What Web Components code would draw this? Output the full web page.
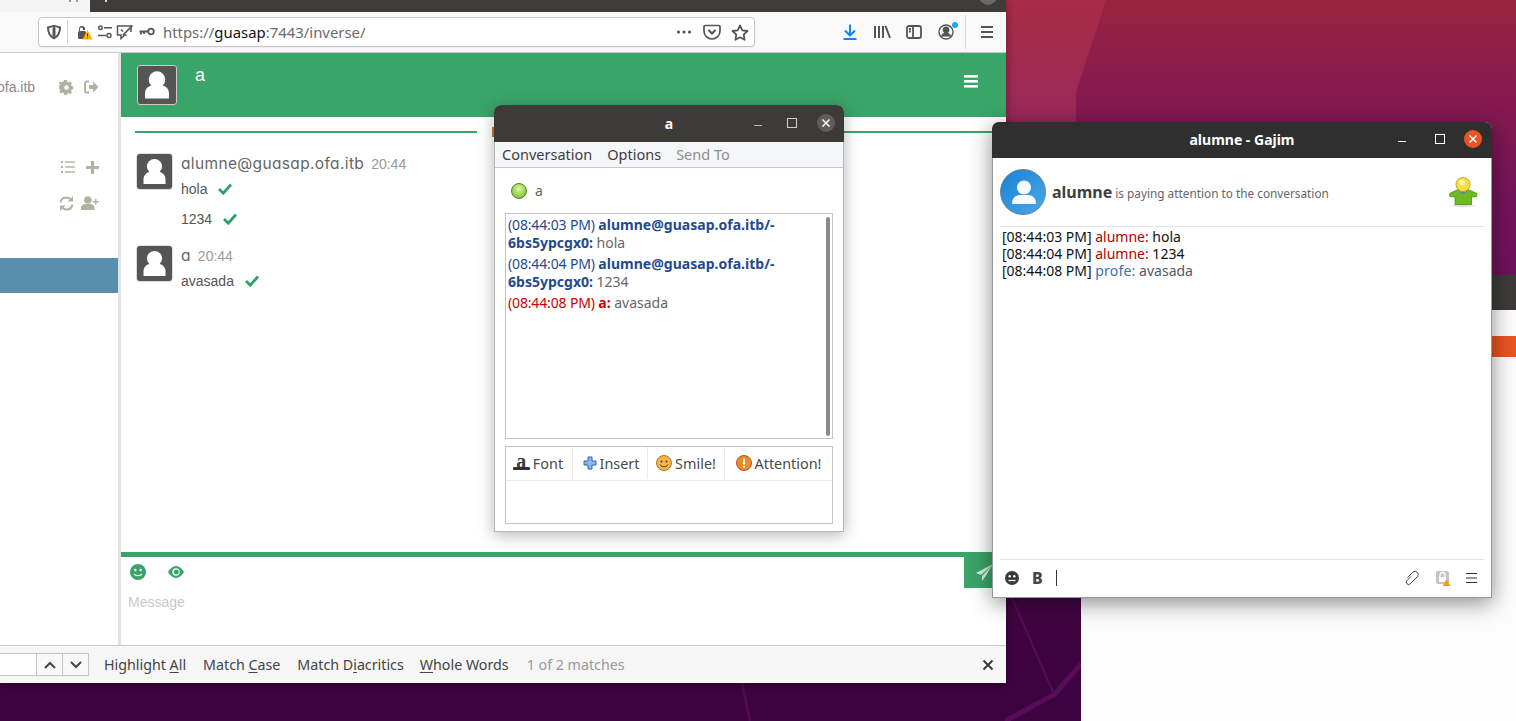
<!DOCTYPE html>
<html>
<head>
<meta charset="utf-8">
<title>guasap</title>
<style>
  html, body { margin: 0; height: 100%; overflow: hidden; }
</style>
</head>
<body>
<desktop-screen>
  <back-window></back-window>
  <browser-window>
    <nav-bar></nav-bar>
    <chat-page>
      <chat-sidebar slot="side"></chat-sidebar>
      <chat-msg name="alumne@guasap.ofa.itb" time="20:44">
        <chat-line>hola</chat-line>
        <chat-line>1234</chat-line>
      </chat-msg>
      <chat-msg name="a" time="20:44">
        <chat-line>avasada</chat-line>
      </chat-msg>
    </chat-page>
    <find-bar></find-bar>
  </browser-window>
  <pidgin-window></pidgin-window>
  <gajim-window></gajim-window>
</desktop-screen>

<script>
const AVATAR = `<svg viewBox="0 0 35 35" width="100%" height="100%" style="display:block"><circle cx="17.5" cy="12.5" r="7.6" fill="#fff"/><path d="M6.5 30v-4.5c0-5 3.5-7.5 7-7.5h8c3.500 0 7 2.500 7 7.500V30z" fill="#fff"/></svg>`;

function define(name, html) {
  customElements.define(name, class extends HTMLElement {
    constructor() {
      super();
      this.attachShadow({ mode: 'open' }).innerHTML = html;
    }
  });
}

define('desktop-screen', `
  <style>
    :host { display: block; position: relative; width: 1516px; height: 721px; overflow: hidden;
      background: linear-gradient(180deg, #98243f 0, #85194f 100px, #74145a 200px, #6b1157 300px, #560a4f 480px, #3f0440 640px, #3c0340 721px); }
    svg { position: absolute; left: 0; top: 0; }
  </style>
  <svg width="1516" height="721" viewBox="0 0 1516 721" fill="none">
    <defs><linearGradient id="wedge" x1="0" y1="0" x2="0" y2="1"><stop offset="0" stop-color="#a92c46"/><stop offset="1" stop-color="#9a285a"/></linearGradient></defs>
    <path d="M1006 0h100l-30 92v30h-70z" fill="url(#wedge)"/>
    <path d="M1012 598l41 94" stroke="#560c58" stroke-width="2"/>
    <path d="M1005 721l50-27 26-30" stroke="#560c58" stroke-width="5"/>
    <path d="M742 683l8 38" stroke="#4f0a52" stroke-width="3"/>
  </svg>
  <slot></slot>
`);

define('back-window', `
  <style>
    :host { position: absolute; left: 1081px; top: 275px; width: 435px; height: 446px; display: flex; flex-direction: column; background: #fcfcfc; }
    .bar { height: 35px; background: #3c3b37; }
    .orange { height: 21px; margin-top: 26px; background: #e95420; }
  </style>
  <div class="bar"></div>
  <div class="orange"></div>
`);

define('browser-window', `
  <style>
    :host { position: absolute; left: 0; top: 0; width: 1006px; height: 683px; display: flex; flex-direction: column; background: #fff; box-shadow: 0 2px 10px rgba(0,0,0,.35); }
  </style>
  <slot></slot>
`);

define('nav-bar', `
  <style>
    :host { display: block; flex: none; font-family: "Noto Sans", sans-serif; }
    .tabs { height: 12px; display: flex; background: #3d3c39; overflow: hidden; }
    .tabs .left { width: 90px; background: #f5f5f5; display: flex; padding-left: 69px; box-sizing: border-box; gap: 5px; }
    .tabs .left i { width: 2px; height: 2px; background: #999; }
    .tabs .mark { width: 2px; height: 2px; background: #ddd; margin-left: 15px; }
    .tabs .grow { flex: 1; }
    .tabs .x { width: 18px; height: 18px; margin: -13px 9px 0 0; border-radius: 50%; background: #6a6966; }
    .bar { height: 41px; box-sizing: border-box; display: flex; align-items: center; background: #f9f9fa; border-bottom: 1px solid #c8c8c8; padding-left: 38px; }
    .url { width: 717px; height: 30px; box-sizing: border-box; border: 1px solid #c6c6c6; border-radius: 4px; background: #fff; display: flex; align-items: center; padding-left: 7px; color: #555; box-shadow: 0 1px 1px rgba(0,0,0,.04); }
    .url svg, .tools svg { display: block; flex: none; }
    .sep { width: 1px; height: 24px; background: #d4d4d4; margin: 0 6px 0 5px; flex: none; }
    .addr { flex: 1; margin-left: 8px; font-size: 14.9px; color: #6b6b6b; white-space: nowrap; }
    .addr b { font-weight: 400; color: #111; }
    .tools { display: flex; align-items: center; margin-left: 87px; }
    .tools .dot { position: relative; }
    .tools .dot::after { content: ""; position: absolute; right: -4px; top: -2px; width: 6px; height: 6px; border-radius: 50%; background: #13a9f2; }
    .tools .vsep { width: 1px; height: 34px; background: #d8d8d8; margin: 0 13px 0 11px; }
  </style>
  <div class="tabs"><div class="left"><i></i><i></i></div><div class="mark"></div><div class="grow"></div><div class="x"></div></div>
  <div class="bar">
    <div class="url">
      <svg width="16" height="16" viewBox="0 0 16 16" fill="none" stroke="#555" stroke-width="2"><path d="M2 3.500c2-.8 4-1.200 6-1.500 2 .3 4 .7 6 1.500 0 5-1.500 8.500-6 10.800C3.500 12 2 8.500 2 3.500z"/><path d="M8 4.500v7" stroke-width="3" stroke-linecap="round"/></svg>
      <div class="sep"></div>
      <svg width="17" height="16" viewBox="0 0 17 16" style="margin-left:2px"><path d="M3 7V5a3 3 0 0 1 6 0v1H7V5a1.500 1.500 0 0 0-3 0v2z" fill="#555"/><rect x="2" y="7" width="8" height="8" rx="1.500" fill="#555"/><path d="M11.500 6l5 9.500h-10z" fill="#ffb300"/><path d="M11.500 9.500v3M11.500 13.500v1" stroke="#333" stroke-width="1"/></svg>
      <svg width="16" height="16" viewBox="0 0 16 16" fill="none" stroke="#555" stroke-width="1.400" style="margin-left:4px"><circle cx="3.500" cy="3.800" r="1.800"/><path d="M7 3.800h8M1 11.500h8"/><circle cx="12" cy="11.500" r="2"/></svg>
      <svg width="18" height="16" viewBox="0 0 18 16" fill="none" stroke="#555" stroke-width="1.500" style="margin-left:3px"><path d="M15 8V2H1.500v9H5v3.500L8.500 11h2"/><path d="M5 5.500l2 2M16.500 1.500L7 11" stroke-width="1.700"/></svg>
      <svg width="16" height="16" viewBox="0 0 16 16" fill="none" stroke="#555" stroke-width="1.800" style="margin-left:5px"><circle cx="12" cy="7.500" r="2.800"/><path d="M9 7.500H0.500M2 7.500v3M5 7.500v2.500"/></svg>
      <div class="addr">https://<b>guasap</b>:7443/inverse/</div>
      <svg width="16" height="16" viewBox="0 0 16 16" fill="#555"><circle cx="2.500" cy="8" r="1.600"/><circle cx="8" cy="8" r="1.600"/><circle cx="13.500" cy="8" r="1.600"/></svg>
      <svg width="18" height="16" viewBox="0 0 18 16" fill="none" stroke="#555" stroke-width="1.700" style="margin-left:11px"><path d="M2 1.500h14a1 1 0 0 1 1 1V7a8 8 0 0 1-16 0V2.500a1 1 0 0 1 1-1z"/><path d="M5.500 6L9 9.500 12.500 6" stroke-width="2"/></svg>
      <svg width="18" height="17" viewBox="0 0 18 17" fill="none" stroke="#555" stroke-width="1.800" style="margin-left:10px;margin-right:5px"><path d="M9 1.500l2.300 4.800 5.200.7-3.800 3.600.9 5.200L9 13.300l-4.600 2.500.9-5.200L1.500 7l5.200-.7z" stroke-linejoin="round"/></svg>
    </div>
    <div class="tools">
      <svg width="16" height="16" viewBox="0 0 16 16" fill="none" stroke="#0a84ff" stroke-width="2"><path d="M8 0.500v10M3 6.500l5 5 5-5"/><path d="M1.500 15h13"/></svg>
      <svg width="18" height="16" viewBox="0 0 18 16" fill="none" stroke="#555" stroke-width="2" style="margin-left:15px"><path d="M2 2v12M6 2v12M10 2v12M12.500 2l4.500 12"/></svg>
      <svg width="16" height="14" viewBox="0 0 16 14" fill="none" stroke="#555" stroke-width="1.800" style="margin-left:15px"><rect x="1" y="1" width="14" height="12" rx="2"/><path d="M7 1v12M3 4h2M3 6.500h2"/></svg>
      <div class="dot" style="margin-left:16px"><svg width="16" height="16" viewBox="0 0 16 16" fill="none" stroke="#555" stroke-width="1.400"><circle cx="8" cy="8" r="7"/><circle cx="8" cy="6" r="2.700" fill="#555"/><path d="M3.500 12.500c1-2.500 2.500-3 4.500-3s3.500.5 4.500 3" fill="#555"/></svg></div>
      <div class="vsep"></div>
      <svg width="14" height="14" viewBox="0 0 14 14" fill="none" stroke="#555" stroke-width="2" style="margin-left:1px"><path d="M1 2h12M1 7h12M1 12h12"/></svg>
    </div>
  </div>
`);

define('chat-page', `
  <style>
    :host { flex: 1; min-height: 0; display: grid; grid-template-columns: 118px 1fr; background: #fff; font-family: "Liberation Sans", sans-serif; }
    .main { border-left: 3px solid #e2e2e2; display: flex; flex-direction: column; min-width: 0; }
    .head { height: 64px; flex: none; background: #3aa569; display: flex; padding: 12px 0 0 16px; box-sizing: border-box; color: #fff; }
    .avatar { width: 40px; height: 40px; box-sizing: border-box; background: #555; border: 1px solid #ccc; border-radius: 3px; }
    .title { font-size: 18px; margin: 0 0 0 18px; line-height: 20px; }
    .menu { margin: 10px 28px 0 auto; }
    .rule { display: flex; align-items: center; margin: 14px 14px 0; height: 2px; flex: none; }
    .rule i { flex: 1; height: 2px; background: #3aa569; }
    .rule span { width: 173px; height: 10px; display: flex; justify-content: flex-start; padding-left: 15px; box-sizing: border-box; }
    .rule span::before { content: ""; width: 3px; background: #c67a3a; }
    .log { flex: 1; padding: 21px 0 0 16px; min-height: 0; }
    .input { flex: none; height: 93px; box-sizing: border-box; border-top: 5px solid #3aa569; display: flex; flex-direction: column; position: relative; }
    .btns { display: flex; align-items: center; padding: 7px 0 0 9px; gap: 22px; }
    .btns svg { display: block; }
    .ph { color: #c9c9c9; font-size: 14px; margin: 14px 0 0 7px; }
    .send { position: absolute; right: 0; top: 0; width: 42px; height: 31px; background: #3aa569; }
    .send svg { position: absolute; left: 12px; top: 7px; }
  </style>
  <slot name="side"></slot>
  <div class="main">
    <div class="head">
      <div class="avatar">${AVATAR}</div>
      <h2 class="title" style="font-weight:400">a</h2>
      <svg class="menu" width="14" height="13" viewBox="0 0 14 13" fill="#fff"><rect y="0" width="14" height="2.600"/><rect y="5" width="14" height="2.600"/><rect y="10" width="14" height="2.600"/></svg>
    </div>
    <div class="rule"><i></i><span></span><i></i></div>
    <div class="log"><slot></slot></div>
    <div class="input">
      <div class="btns">
        <svg width="16" height="16" viewBox="0 0 16 16"><circle cx="8" cy="8" r="8" fill="#3aa569"/><circle cx="5.300" cy="6" r="1.200" fill="#fff"/><circle cx="10.700" cy="6" r="1.200" fill="#fff"/><path d="M4 10c1.500 2.200 6.500 2.200 8 0" stroke="#fff" stroke-width="1.200" fill="none"/></svg>
        <svg width="16" height="12" viewBox="0 0 16 12"><path d="M0 6c2-3.500 5-6 8-6s6 2.500 8 6c-2 3.500-5 6-8 6s-6-2.500-8-6z" fill="#3aa569"/><circle cx="8" cy="6" r="3.700" fill="#fff"/><circle cx="8.300" cy="6" r="2.500" fill="#3aa569"/></svg>
      </div>
      <div class="ph">Message</div>
      <div class="send"><svg width="18" height="17" viewBox="0 0 18 17"><path d="M17 0L0 9l5 2zM17 0L6 12v5l3-4z" fill="#d8efe3"/></svg></div>
    </div>
  </div>
`);

define('chat-sidebar', `
  <style>
    :host { display: flex; flex-direction: column; color: #b3b1a4; overflow: hidden; }
    .row { display: flex; align-items: center; height: 20px; padding-right: 19px; }
    .row svg { display: block; flex: none; }
    .me { margin-top: 24px; }
    .me span { margin-left: -3px; margin-right: auto; color: #888; font-size: 14px; }
    .r2 { margin-top: 60px; justify-content: flex-end; }
    .r3 { margin-top: 16px; justify-content: flex-end; }
    .row svg + svg { margin-left: 10px; }
    .sel { margin-top: 45px; height: 35px; background: #568eac; }
  </style>
  <div class="row me">
    <span>ofa.itb</span>
    <svg width="15" height="15" viewBox="0 0 15 15" fill="currentColor" fill-rule="evenodd"><path d="M6 0h3l.4 2 1.500.7 1.800-1.100 2 2-1.100 1.800.7 1.500 2 .4v3l-2 .4-.7 1.500 1.100 1.800-2 2-1.800-1.100-1.500.7L9 17H6l-.4-2-1.500-.7-1.800 1.100-2-2 1.100-1.800-.7-1.500-2-.4v-3l2-.4.7-1.500L-.7 3.600l2-2 1.800 1.100 1.500-.7z" transform="scale(.88)"/><circle cx="7.500" cy="7.500" r="2.200" fill="#fff"/></svg>
    <svg width="15" height="14" viewBox="0 0 15 14" fill="none" stroke="currentColor"><path d="M5 1.500H3a2 2 0 0 0-2 2v7a2 2 0 0 0 2 2h2" stroke-width="2"/><path d="M5 5h4V1.500L14.500 7 9 12.500V9H5z" fill="currentColor" stroke="none"/></svg>
  </div>
  <div class="row r2">
    <svg width="14" height="12" viewBox="0 0 14 12" fill="currentColor"><rect width="2" height="2"/><rect y="5" width="2" height="2"/><rect y="10" width="2" height="2"/><rect x="4" y=".3" width="10" height="1.400"/><rect x="4" y="5.300" width="10" height="1.400"/><rect x="4" y="10.300" width="10" height="1.400"/></svg>
    <svg width="13" height="13" viewBox="0 0 13 13" fill="currentColor" style="margin-left:11px"><path d="M5 0h3v5h5v3H8v5H5V8H0V5h5z"/></svg>
  </div>
  <div class="row r3">
    <svg width="15" height="15" viewBox="0 0 15 15" fill="none" stroke="currentColor" stroke-width="2"><path d="M1.500 6.500C2 3.500 4.500 1.500 7.500 1.500c2 0 3.700 1 4.800 2.500"/><path d="M13.500 8.500C13 11.500 10.500 13.500 7.500 13.500c-2 0-3.700-1-4.800-2.500"/><path d="M14 0v5.500H8.500zM1 15V9.500h5.500z" fill="currentColor" stroke="none"/></svg>
    <svg width="18" height="14" viewBox="0 0 18 14" fill="currentColor" style="margin-left:7px"><circle cx="6.800" cy="4" r="3.800"/><path d="M0 14v-2c0-2.500 2-4 4-4h5.500c2 0 4 1.500 4 4v2z"/><path d="M14 3h1.500v2H18v1.500h-2.500v2H14v-2h-2.500V5H14z"/></svg>
  </div>
  <div class="sel"></div>
`);

customElements.define('chat-msg', class extends HTMLElement {
  constructor() {
    super();
    this.attachShadow({ mode: 'open' }).innerHTML = `
      <style>
        :host { display: grid; grid-template-columns: 35px 1fr; column-gap: 9px; margin-bottom: 12px; font-family: "Liberation Sans", sans-serif; }
        .pic { width: 35px; height: 35px; background: #555; border-radius: 3px; box-shadow: 0 0 0 1px #ddd; }
        .who { display: flex; align-items: baseline; gap: 7px; height: 20px; box-sizing: border-box; padding-top: 1px; line-height: 18px; }
        .name { font-family: Inter, sans-serif; font-feature-settings: "cv11"; font-size: 15.5px; color: #666; letter-spacing: .35px; }
        .time { font-size: 14px; color: #999; }
      </style>
      <div class="pic">${AVATAR}</div>
      <div>
        <div class="who"><span class="name"></span><span class="time"></span></div>
        <slot></slot>
      </div>`;
  }
  connectedCallback() {
    this.shadowRoot.querySelector('.name').textContent = this.getAttribute('name');
    this.shadowRoot.querySelector('.time').textContent = this.getAttribute('time');
  }
});

define('chat-line', `
  <style>
    :host { display: flex; align-items: center; gap: 11px; height: 30px; font-size: 14px; color: #555; }
    svg { display: block; }
  </style>
  <slot></slot>
  <svg width="14" height="12" viewBox="0 0 14 12" fill="none" stroke="#2da067" stroke-width="2.800"><path d="M1 6l4.300 4.200L13 1.500"/></svg>
`);

define('find-bar', `
  <style>
    :host { flex: none; height: 38px; box-sizing: border-box; display: flex; align-items: center; background: #f6f6f6; border-top: 1px solid #c8c8c8; font-family: "Noto Sans", sans-serif; font-size: 14.25px; color: #444; white-space: nowrap; }
    .field { width: 37px; height: 23px; box-sizing: border-box; background: #fff; border: 1px solid #c4c4c4; border-left: 0; flex: none; }
    .btn { width: 26px; height: 23px; box-sizing: border-box; border: 1px solid #c4c4c4; border-left: 0; background: #f8f8f8; display: flex; align-items: center; justify-content: center; flex: none; }
    .btn svg { display: block; }
    .opt { flex: none; }
    .count { color: #999; margin-left: 18px; }
    .close { margin: 0 12px 0 auto; display: block; }
    u { text-underline-offset: 2px; }
  </style>
  <div class="field"></div>
  <div class="btn"><svg width="12" height="8" viewBox="0 0 12 8" fill="none" stroke="#444" stroke-width="2"><path d="M1 7l5-5 5 5"/></svg></div>
  <div class="btn"><svg width="12" height="8" viewBox="0 0 12 8" fill="none" stroke="#444" stroke-width="2"><path d="M1 1l5 5 5-5"/></svg></div>
  <span class="opt" style="margin-left:15px">Highlight <u>A</u>ll</span>
  <span class="opt" style="margin-left:17px">Match <u>C</u>ase</span>
  <span class="opt" style="margin-left:17px">Match D<u>i</u>acritics</span>
  <span class="opt" style="margin-left:16px"><u>W</u>hole Words</span>
  <span class="count">1 of 2 matches</span>
  <svg class="close" width="12" height="12" viewBox="0 0 12 12" stroke="#333" stroke-width="1.800"><path d="M1.500 1.500l9 9M10.500 1.500l-9 9"/></svg>
`);

define('pidgin-window', `
  <style>
    :host { position: absolute; left: 494px; top: 105px; width: 350px; height: 427px; box-sizing: border-box; display: flex; flex-direction: column; background: #fff; border-radius: 7px 7px 0 0; border: 1px solid #b4b6b8; border-top: 0; box-shadow: 0 3px 16px rgba(0,0,0,.3); font-family: "Noto Sans", sans-serif; font-size: 14px; color: #555; }
    .title { margin: 0 -1px; height: 37px; flex: none; background: #3c3b37; border-radius: 7px 7px 0 0; color: #fff; font-weight: 700; display: grid; grid-template-columns: 1fr auto 1fr; align-items: center; }
    .win { display: flex; justify-content: flex-end; align-items: center; }
    .win svg { display: block; }
    .close { width: 18px; height: 18px; border-radius: 50%; background: #5e5d5a; display: flex; align-items: center; justify-content: center; margin: -2px 9px 0 20px; }
    .menu { height: 26px; flex: none; box-sizing: border-box; padding: 0 0 1px 7px; background: #f5f6f7; border-bottom: 1px solid #c4c7ca; display: flex; align-items: center; gap: 15px; color: #3d3d3d; font-size: 14.5px; }
    .menu .off { color: #8f8f8f; }
    .who { height: 45px; flex: none; display: flex; align-items: center; padding-left: 16px; gap: 8px; color: #666; }
    .lamp { width: 16px; height: 16px; border-radius: 50%; border: 1px solid #4c8a1e; box-sizing: border-box; background: radial-gradient(circle at 50% 35%, #dff5ad, #89c93c 70%, #6aa826); }
    .log { margin: 0 10px; height: 226px; flex: none; box-sizing: border-box; border: 1px solid #c2c5c8; padding: 2px 14px 0 2px; position: relative; line-height: 18px; }
    .log p { margin: 0 0 3px; letter-spacing: -.15px; }
    .log .me { color: #1f4b8e; }
    .log .other { color: #cc0000; }
    .log b { font-weight: 700; letter-spacing: .02px; }
    .log span { color: #666; letter-spacing: 0; }
    .bar { position: absolute; right: 2px; top: 3px; bottom: 2px; width: 4px; border-radius: 2px; background: #8a8a8a; }
    .edit { margin: 7px 10px 0; height: 78px; box-sizing: border-box; border: 1px solid #c2c5c8; flex: none; }
    .tools { height: 32px; padding-bottom: 1px; display: flex; border-bottom: 1px solid #ebebeb; color: #4a4a4a; font-size: 14.4px; }
    .tools div { display: flex; align-items: center; justify-content: center; gap: 3px; border-right: 1px solid #ebebeb; box-sizing: border-box; }
    .tools div:last-child { border: 0; }
    .tools svg { display: block; }
    .fi { position: relative; display: block; width: 17px; height: 20px; text-align: center; font: 700 20px/17px "Liberation Serif", serif; color: #3a3a3a; }
    .fi::after { content: ""; position: absolute; left: 0; right: 0; top: 14px; height: 3px; border-radius: 1px; background: #333; }
  </style>
  <div class="title">
    <span></span><span>a</span>
    <div class="win">
      <svg width="10" height="10" viewBox="0 0 10 10" stroke="#b9b9b7" style="margin-right:24px"><path d="M1 6.500h8"/></svg>
      <svg width="10" height="10" viewBox="0 0 10 10" fill="none" stroke="#cfcfcd" style="margin-top:-2px"><rect x=".5" y=".5" width="9" height="9"/></svg>
      <div class="close"><svg width="10" height="10" viewBox="0 0 10 10" stroke="#fff" stroke-width="1.500"><path d="M1.500 1.500l7 7M8.500 1.500l-7 7"/></svg></div>
    </div>
  </div>
  <div class="menu"><span>Conversation</span><span>Options</span><span class="off">Send To</span></div>
  <div class="who"><div class="lamp"></div><span>a</span></div>
  <div class="log">
    <p class="me">(08:44:03 PM) <b>alumne@guasap.ofa.itb/-<wbr>6bs5ypcgx0:</b> <span>hola</span></p>
    <p class="me">(08:44:04 PM) <b>alumne@guasap.ofa.itb/-<wbr>6bs5ypcgx0:</b> <span>1234</span></p>
    <p class="other">(08:44:08 PM) <b>a:</b> <span>avasada</span></p>
    <div class="bar"></div>
  </div>
  <div class="edit">
    <div class="tools">
      <div style="width:67px;padding-right:2px"><span class="fi">a</span>Font</div>
      <div style="width:75px;padding-left:2px"><svg width="14" height="14" viewBox="0 0 14 14"><path d="M5 1h4v4h4v4H9v4H5V9H1V5h4z" fill="#8db6e8" stroke="#2a62ae"/></svg>Insert</div>
      <div style="width:77px"><svg width="16" height="16" viewBox="0 0 16 16"><circle cx="8" cy="8" r="7.500" fill="#f2b44c" stroke="#a9772a"/><circle cx="5.500" cy="6.500" r="1" fill="#5b3c10"/><circle cx="10.500" cy="6.500" r="1" fill="#5b3c10"/><path d="M4 9.500c1.500 3 6.500 3 8 0" stroke="#5b3c10" fill="none"/></svg>Smile!</div>
      <div style="flex:1"><svg width="16" height="16" viewBox="0 0 16 16"><circle cx="8" cy="8" r="7.500" fill="#ec8a2c" stroke="#a9541a"/><path d="M8 3.500v6" stroke="#fff" stroke-width="2"/><circle cx="8" cy="11.800" r="1.100" fill="#fff"/></svg>Attention!</div>
    </div>
  </div>
`);

define('gajim-window', `
  <style>
    :host { position: absolute; left: 992px; top: 122px; width: 500px; height: 476px; box-sizing: border-box; display: flex; flex-direction: column; background: #fff; border-radius: 7px 7px 0 0; border: 1px solid #9a9a9a; border-top: 0; box-shadow: 0 5px 22px rgba(0,0,0,.45); font-family: "Noto Sans", sans-serif; color: #444; }
    .title { margin: 0 -1px; height: 36px; flex: none; box-sizing: border-box; padding-bottom: 1px; background: #302f2f; border-radius: 7px 7px 0 0; color: #fff; font-size: 14px; font-weight: 700; display: grid; grid-template-columns: 1fr auto 1fr; align-items: center; }
    .win { display: flex; justify-content: flex-end; align-items: center; }
    .win svg { display: block; }
    .close { width: 18px; height: 18px; border-radius: 50%; background: #e95420; display: flex; align-items: center; justify-content: center; margin: -1px 10px 0 20px; }
    .head { height: 69px; flex: none; margin: 0 7px; display: flex; align-items: center; border-bottom: 1px solid #e4e4e4; box-sizing: border-box; }
    .pic { width: 46px; height: 46px; border-radius: 50%; flex: none; background: linear-gradient(135deg, #1c80d4, #49a9e8); border: 1px solid #5e7f98; box-sizing: border-box; overflow: hidden; }
    .name { font-size: 16px; font-weight: 700; margin-left: 6px; color: #3f3f3f; }
    .state { font-size: 11.8px; margin-left: 3px; color: #666; padding-top: 1px; }
    .shirt { margin-left: auto; margin-right: 6px; display: block; }
    .log { flex: 1; min-height: 0; margin: 0; padding: 1px 9px; font-size: 14px; line-height: 17px; color: #111; }
    .log p { margin: 0; }
    .r { color: #b30000; }
    .b { color: #3a70b4; letter-spacing: .2px; }
    .g { color: #556; }
    .foot { height: 36px; flex: none; margin: 0 7px; padding: 0 5px 1px; border-top: 1px solid #e4e4e4; display: flex; align-items: center; }
    .foot svg { display: block; }
    .foot b { font-family: "Noto Sans", sans-serif; font-size: 16px; color: #444; margin-left: 13px; font-weight: 800; }
    .cursor { width: 1px; height: 16px; background: #333; margin-left: 13px; }
    .right { margin-left: auto; margin-right: 2px; display: flex; align-items: center; gap: 15px; }
  </style>
  <div class="title">
    <span></span><span>alumne - Gajim</span>
    <div class="win">
      <svg width="10" height="10" viewBox="0 0 10 10" stroke="#fff"><path d="M1 6.500h8"/></svg>
      <svg width="10" height="10" viewBox="0 0 10 10" fill="none" stroke="#fff" style="margin-left:28px;margin-top:-2px"><rect x=".5" y=".5" width="9" height="9"/></svg>
      <div class="close" style="margin-left:19px"><svg width="10" height="10" viewBox="0 0 10 10" stroke="#fff" stroke-width="1.500"><path d="M1.500 1.500l7 7M8.500 1.500l-7 7"/></svg></div>
    </div>
  </div>
  <div class="head">
    <div class="pic"><svg viewBox="0 0 46 46" width="46" height="46" style="display:block"><circle cx="23" cy="17.500" r="7" fill="#f5fbff"/><path d="M11 34c0-6 3.500-9 8-9h8c4.500 0 8 3 8 9z" fill="#f5fbff"/></svg></div>
    <span class="name">alumne</span><span class="state">is paying attention to the conversation</span>
    <svg class="shirt" width="30" height="30" viewBox="0 0 30 30"><ellipse cx="15" cy="28.500" rx="11" ry="1.500" fill="#ddd"/><path d="M9 13c2-1.500 10-1.500 12 0l8 3.500-.5 3-5 .5v7.500H7V20l-5-.5-.5-3z" fill="#6fb922" stroke="#4f8f12" stroke-width=".8"/><path d="M11.500 12h7v3l-3.500 2-3.500-2z" fill="#5a83c4"/><circle cx="15" cy="7.500" r="7" fill="#f5de45" stroke="#c6a71a"/><circle cx="14" cy="5.500" r="3" fill="#fbf2a4"/></svg>
  </div>
  <div class="log">
    <p>[08:44:03 PM] <span class="r">alumne:</span> hola</p>
    <p>[08:44:04 PM] <span class="r">alumne:</span> 1234</p>
    <p>[08:44:08 PM] <span class="b">profe:</span> <span class="g">avasada</span></p>
  </div>
  <div class="foot">
    <svg width="14" height="14" viewBox="0 0 14 14"><circle cx="7" cy="7" r="7" fill="#3a3a3a"/><circle cx="4.700" cy="5.300" r="1.200" fill="#fff"/><circle cx="9.300" cy="5.300" r="1.200" fill="#fff"/><path d="M3.500 9.500h7" stroke="#fff" stroke-width="1.200"/></svg>
    <b>B</b>
    <div class="cursor"></div>
    <div class="right">
      <svg width="16" height="16" viewBox="0 0 16 16" fill="none" stroke="#444" stroke-width="1"><path d="M7 6.500L3 10.500a2.300 2.300 0 0 0 3.300 3.300L13.500 6.600a3.200 3.200 0 0 0-4.500-4.500L3.500 7.600"/></svg>
      <svg width="16" height="16" viewBox="0 0 16 16"><rect x="1" y="1" width="13" height="13" rx="2" fill="#c4c4c4"/><path d="M5 7V5a2.500 2.500 0 0 1 5 0v2" stroke="#fff" stroke-width="1.300" fill="none"/><rect x="4" y="7" width="7" height="5" fill="#fff"/><path d="M11.500 9.500l4 6.500h-8z" fill="#f59b11"/></svg>
      <svg width="11" height="12" viewBox="0 0 11 12" stroke="#333"><path d="M0 1.500h11M0 6h11M0 10.500h11"/></svg>
    </div>
  </div>
`);
</script>
</body>
</html>
